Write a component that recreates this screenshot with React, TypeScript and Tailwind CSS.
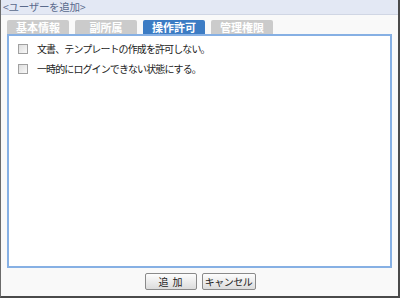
export default function App() {
  const tabs = [
    { label: "基本情報", active: false },
    { label: "副所属", active: false },
    { label: "操作許可", active: true },
    { label: "管理権限", active: false },
  ];

  const options = [
    "文書、テンプレートの作成を許可しない。",
    "一時的にログインできない状態にする。",
  ];

  return (
    <div
      className="w-[400px] h-[298px] flex flex-col bg-[#f9f9f9] border-l border-l-[#6b6b6b] border-r-2 border-r-[#4a4a4a] border-b-2 border-b-[#4a4a4a] text-[10px] text-[#222]"
      style={{ fontFamily: '"Noto Sans CJK JP", "Noto Sans", sans-serif' }}
    >
      <div className="h-[15px] flex items-center px-[2px] bg-[#e3e8f4] border-b border-[#d0d6e4] text-[#5a6a8c] leading-none tracking-[-0.3px] text-[10.5px]">
        &lt;ユーザーを追加&gt;
      </div>

      <div className="flex gap-[6px] pl-[6px] mt-[5px]">
        {tabs.map((tab) => (
          <div
            key={tab.label}
            className={
              tab.active
                ? "w-[62px] h-[14px] flex items-center justify-center rounded-t-[2px] bg-[#3c7cc4] text-white font-bold leading-none text-[11px]"
                : "w-[62px] h-[14px] flex items-center justify-center rounded-t-[2px] bg-[#cbcbcb] text-white font-bold leading-none text-[11px]"
            }
          >
            {tab.label}
          </div>
        ))}
      </div>

      <div className="mx-[6px] h-[234px] bg-white border-2 border-[#86b0e4] flex flex-col gap-[10px] pt-[8px] pl-[9px]">
        {options.map((text) => (
          <label key={text} className="flex items-center gap-[9px] leading-none">
            <span className="w-[10px] h-[10px] shrink-0 border border-[#a0a0a0] bg-gradient-to-br from-[#dedede] to-[#f8f8f8]" />
            <span className="tracking-[-0.9px] whitespace-nowrap">{text}</span>
          </label>
        ))}
      </div>

      <div className="flex justify-center gap-[5px] mt-[5px] pl-[1px]">
        <button className="w-[52px] h-[17px] flex items-center justify-center border border-[#8a8a8a] rounded-[2px] bg-gradient-to-b from-[#fdfdfd] to-[#dcdcdc] leading-none tracking-[4px] pl-[4px] whitespace-nowrap">
          追加
        </button>
        <button className="w-[54px] h-[17px] flex items-center justify-center border border-[#8a8a8a] rounded-[2px] bg-gradient-to-b from-[#fdfdfd] to-[#dcdcdc] leading-none tracking-[-0.5px] whitespace-nowrap">
          キャンセル
        </button>
      </div>
    </div>
  );
}
